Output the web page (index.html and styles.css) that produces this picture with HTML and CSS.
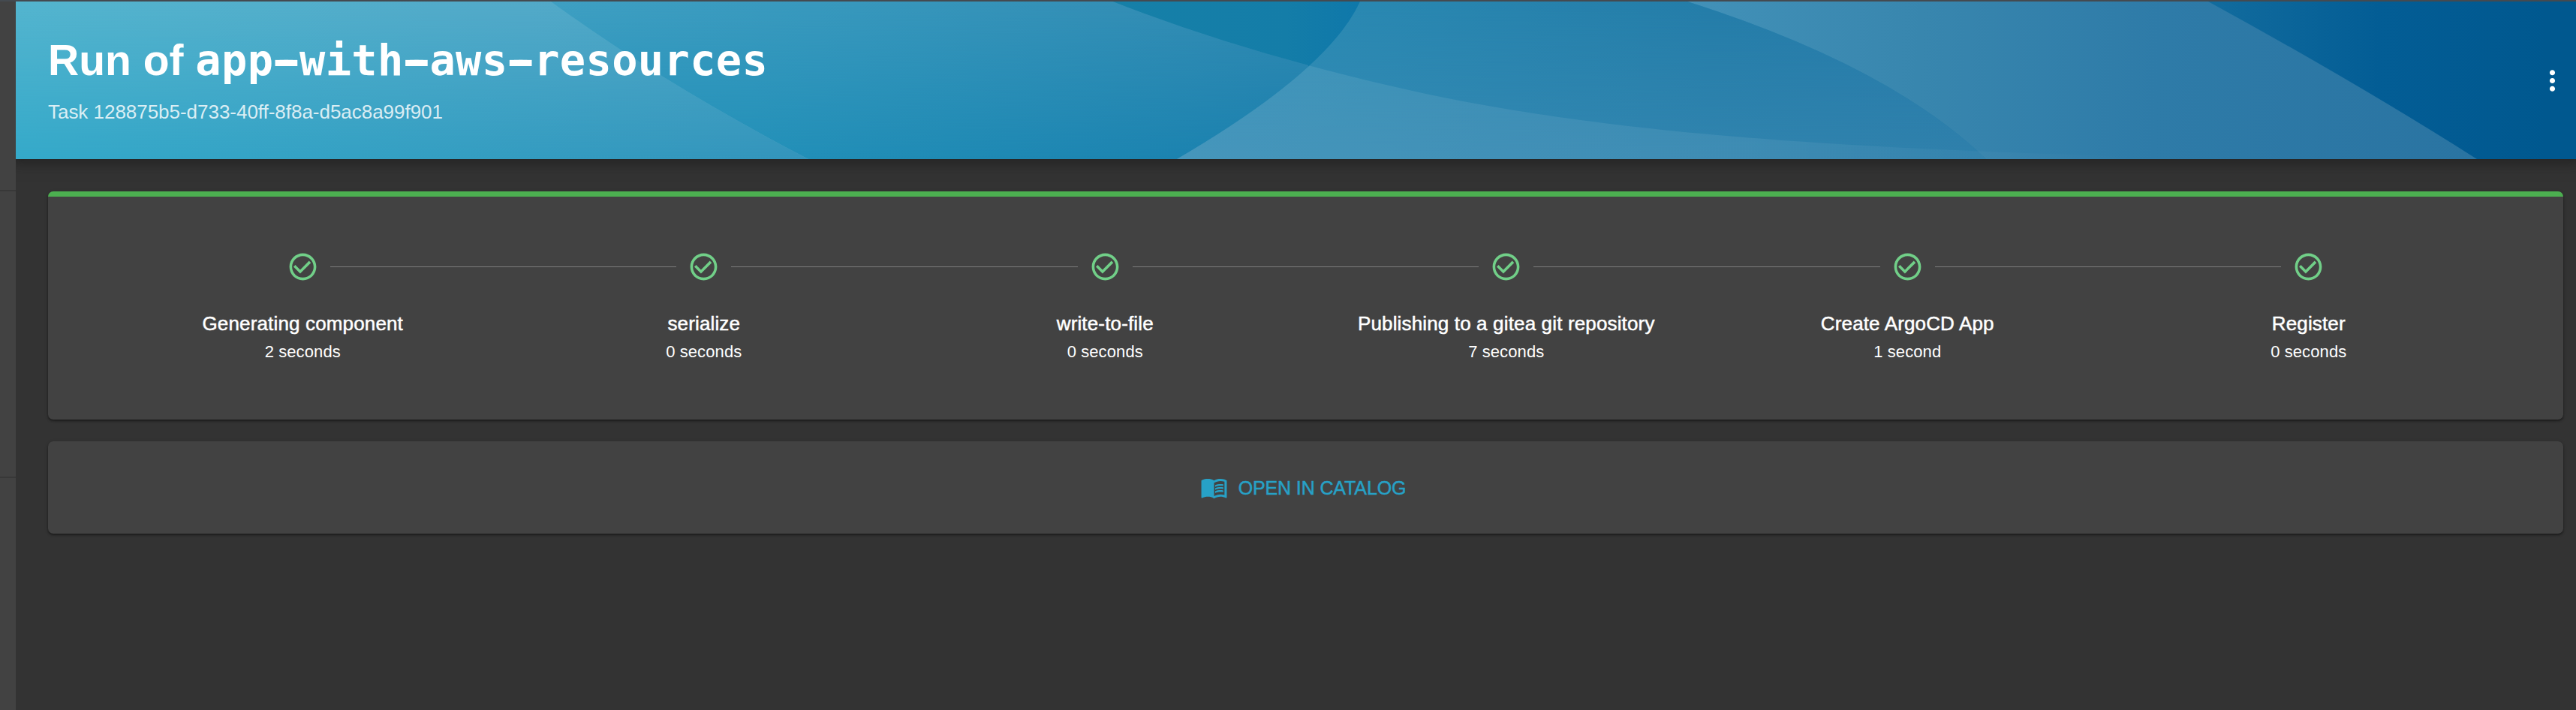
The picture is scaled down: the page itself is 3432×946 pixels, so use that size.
FILE: index.html
```html
<!DOCTYPE html>
<html lang="en">
<head>
<meta charset="utf-8">
<title>Run of app-with-aws-resources</title>
<link rel="stylesheet" href="styles.css">
</head>
<body>
<svg class="sprite" aria-hidden="true">
  <symbol id="check" viewBox="0 0 24 24"><path d="M16.59 7.58L10 14.17l-3.59-3.58L5 12l5 5 8-8zM12 2C6.48 2 2 6.48 2 12s4.48 10 10 10 10-4.48 10-10S17.52 2 12 2zm0 18c-4.42 0-8-3.58-8-8s3.58-8 8-8 8 3.58 8 8-3.58 8-8 8z"/></symbol>
</svg>
<div class="topline"></div>
<div class="app">
  <aside class="sidebar">
    <hr class="divider divider-first">
    <hr class="divider divider-second">
  </aside>
  <main class="page">
    <header class="header">
      <svg class="waves" viewBox="21 2 3411 210" preserveAspectRatio="none" aria-hidden="true">
        <defs>
          <linearGradient id="base" gradientUnits="userSpaceOnUse" x1="1482" y1="0" x2="3400" y2="0">
            <stop offset="0" stop-color="#1680a8"/><stop offset=".12" stop-color="#147da8"/><stop offset=".17" stop-color="#0f78aa"/><stop offset=".76" stop-color="#126c9e"/><stop offset=".88" stop-color="#035d95"/><stop offset="1" stop-color="#00588f"/>
          </linearGradient>
          <linearGradient id="left" gradientUnits="userSpaceOnUse" x1="21" y1="0" x2="1077" y2="0">
            <stop offset="0" stop-color="#54b5cf"/><stop offset=".65" stop-color="#53aac9"/><stop offset="1" stop-color="#4fa4c4"/>
          </linearGradient>
          <linearGradient id="leftLow" gradientUnits="userSpaceOnUse" x1="21" y1="0" x2="1077" y2="0">
            <stop offset="0" stop-color="#34a9c9"/><stop offset="1" stop-color="#3394bb"/>
          </linearGradient>
          <linearGradient id="mid" gradientUnits="userSpaceOnUse" x1="734" y1="0" x2="1743" y2="0">
            <stop offset="0" stop-color="#3fa0c3"/><stop offset=".4" stop-color="#3898bd"/><stop offset="1" stop-color="#3189b1"/>
          </linearGradient>
          <linearGradient id="midLow" gradientUnits="userSpaceOnUse" x1="1000" y1="0" x2="1700" y2="0">
            <stop offset="0" stop-color="#2290b8"/><stop offset="1" stop-color="#1a80ae"/>
          </linearGradient>
          <linearGradient id="lens" gradientUnits="userSpaceOnUse" x1="1743" y1="0" x2="2640" y2="0">
            <stop offset="0" stop-color="#2a8ab3"/><stop offset=".6" stop-color="#247da9"/><stop offset="1" stop-color="#267aaa"/>
          </linearGradient>
          <linearGradient id="lensLow" gradientUnits="userSpaceOnUse" x1="1568" y1="0" x2="2640" y2="0">
            <stop offset="0" stop-color="#348cb5"/><stop offset="1" stop-color="#2f80ab"/>
          </linearGradient>
          <linearGradient id="band" gradientUnits="userSpaceOnUse" x1="2248" y1="0" x2="3300" y2="60">
            <stop offset="0" stop-color="#4291b8"/><stop offset=".3" stop-color="#3886ae"/><stop offset=".6" stop-color="#2e7ba8"/><stop offset="1" stop-color="#2a74a2"/>
          </linearGradient>
          <linearGradient id="sheen" gradientUnits="userSpaceOnUse" x1="1568" y1="0" x2="2850" y2="0">
            <stop offset="0" stop-color="#fff" stop-opacity=".09"/><stop offset=".6" stop-color="#fff" stop-opacity=".07"/><stop offset="1" stop-color="#fff" stop-opacity="0"/>
          </linearGradient>
          <linearGradient id="fade" x1="0" y1="0" x2="0" y2="1">
            <stop offset="0" stop-color="#fff" stop-opacity="0"/><stop offset="1" stop-color="#fff"/>
          </linearGradient>
          <mask id="down" maskUnits="userSpaceOnUse" x="0" y="0" width="3432" height="214"><rect width="3432" height="214" fill="url(#fade)"/></mask>
          <clipPath id="lensClip"><path d="M1812 2H3300V212H1568Q1770 94 1812 2Z"/></clipPath>
        </defs>
        <rect x="21" y="2" width="3411" height="210" fill="url(#base)"/>
        <path fill="url(#mid)" d="M700 2H1482.600Q1605 50 1743 87V212H1060Z"/>
        <path fill="url(#midLow)" mask="url(#down)" d="M700 2H1482.600Q1605 50 1743 87V212H1060Z"/>
        <path fill="url(#left)" d="M21 2H734Q885 112 1077 212H21Z"/>
        <path fill="url(#leftLow)" mask="url(#down)" d="M21 2H734Q885 112 1077 212H21Z"/>
        <path fill="url(#lens)" d="M1812 2H2248Q2518 88 2646 212H1568Q1770 94 1812 2Z"/>
        <path fill="url(#lensLow)" mask="url(#down)" d="M1812 2H2248Q2518 88 2646 212H1568Q1770 94 1812 2Z"/>
        <path fill="url(#band)" d="M2248 2H2942Q3141 111 3300 212H2646Q2518 88 2248 2Z"/>
        <path fill="url(#sheen)" clip-path="url(#lensClip)" d="M1743 87C1990 153 2230 194 2900 210V212H1540V87Z"/>
      </svg>
      <div class="heading">
        <h1 class="title">Run of <code class="name">app<span class="dash">-</span>with<span class="dash">-</span>aws<span class="dash">-</span>resources</code></h1>
        <p class="subtitle">Task 128875b5-d733-40ff-8f8a-d5ac8a99f901</p>
      </div>
      <svg class="more" viewBox="0 0 24 24"><path d="M12 8c1.100 0 2-.9 2-2s-.9-2-2-2-2 .9-2 2 .9 2 2 2zm0 2c-1.100 0-2 .9-2 2s.9 2 2 2 2-.9 2-2-.9-2-2-2zm0 6c-1.100 0-2 .9-2 2s.9 2 2 2 2-.9 2-2-.9-2-2-2z"/></svg>
    </header>
    <div class="content">
      <section class="card steps-card">
        <div class="progress"></div>
        <ol class="steps">
          <li class="step"><div class="track"><i class="line hidden"></i><svg class="check"><use href="#check"/></svg><i class="line"></i></div><div class="label">Generating component</div><div class="time">2 seconds</div></li>
          <li class="step"><div class="track"><i class="line"></i><svg class="check"><use href="#check"/></svg><i class="line"></i></div><div class="label">serialize</div><div class="time">0 seconds</div></li>
          <li class="step"><div class="track"><i class="line"></i><svg class="check"><use href="#check"/></svg><i class="line"></i></div><div class="label">write-to-file</div><div class="time">0 seconds</div></li>
          <li class="step"><div class="track"><i class="line"></i><svg class="check"><use href="#check"/></svg><i class="line"></i></div><div class="label">Publishing to a gitea git repository</div><div class="time">7 seconds</div></li>
          <li class="step"><div class="track"><i class="line"></i><svg class="check"><use href="#check"/></svg><i class="line"></i></div><div class="label">Create ArgoCD App</div><div class="time">1 second</div></li>
          <li class="step"><div class="track"><i class="line"></i><svg class="check"><use href="#check"/></svg><i class="line hidden"></i></div><div class="label">Register</div><div class="time">0 seconds</div></li>
        </ol>
      </section>
      <section class="card links-card">
        <a class="open">
          <svg class="book" viewBox="0 0 24 24"><path d="M21 5c-1.110-.35-2.330-.5-3.500-.5-1.950 0-4.050.4-5.500 1.500-1.450-1.100-3.550-1.500-5.500-1.500S2.450 4.900 1 6v14.650c0 .25.25.5.5.5.1 0 .15-.05.25-.05C3.100 20.450 5.050 20 6.500 20c1.950 0 4.050.4 5.500 1.500 1.350-.85 3.800-1.500 5.500-1.500 1.650 0 3.350.3 4.750 1.050.1.050.15.050.25.050.25 0 .5-.25.5-.5V6c-.6-.45-1.250-.75-2-1zm0 13.500c-1.100-.35-2.300-.5-3.500-.5-1.700 0-4.150.65-5.500 1.500V8c1.350-.85 3.800-1.500 5.500-1.500 1.200 0 2.400.15 3.500.5v11.500z"/><path d="M17.500 10.500c.88 0 1.730.09 2.500.26V9.240c-.79-.15-1.640-.24-2.500-.24-1.700 0-3.240.29-4.500.83v1.660c1.130-.64 2.700-.99 4.500-.99zM13 12.490v1.660c1.130-.64 2.700-.99 4.500-.99.88 0 1.730.09 2.500.26V11.900c-.79-.15-1.640-.24-2.500-.24-1.700 0-3.240.3-4.500.83zM17.500 14.330c-1.700 0-3.240.29-4.500.83v1.660c1.130-.64 2.700-.99 4.500-.99.88 0 1.730.09 2.500.26v-1.520c-.79-.16-1.640-.24-2.500-.24z"/></svg>
          <span class="open-text">OPEN IN CATALOG</span>
        </a>
      </section>
    </div>
  </main>
</div>
</body>
</html>
```
FILE: styles.css
```css
* { box-sizing: border-box; }
body {
  margin: 0;
  height: 946px;
  overflow: hidden;
  background: #333;
  color: #fff;
  font-family: "Liberation Sans", Arial, sans-serif;
}
.sprite { display: none; }
.topline { height: 2px; background: #444a50; }
.app { display: flex; height: 944px; }
.sidebar { width: 21px; background: #424242; }
.divider { border: 0; height: 2px; margin: 0; background: #383838; }
.divider-first { margin-top: 251px; }
.divider-second { margin-top: 380px; }
.page { flex: 1; overflow: hidden; }
.header {
  position: relative;
  display: flex;
  align-items: center;
  justify-content: space-between;
  height: 210px;
  padding: 0 10px 0 43px;
  box-shadow: 0 0 16px 6px rgba(20, 20, 20, .5);
}
.waves { position: absolute; inset: 0; width: 100%; height: 100%; }
.heading { position: relative; align-self: flex-start; padding-top: 44px; }
.title { margin: 0; font-size: 57px; line-height: 68px; font-weight: 700; white-space: nowrap; }
.name { font-family: "DejaVu Sans Mono", monospace; font-size: 57px; line-height: 1; letter-spacing: .36px; }
/* widens the hyphens without changing their advance */
.dash { text-shadow: -6px 0 #fff, 6px 0 #fff; }
.subtitle { margin: 20px 0 0; font-size: 26px; line-height: 30px; letter-spacing: -.03px; color: rgba(255, 255, 255, .82); }
.more { position: relative; width: 43px; height: 43px; fill: #fff; }
.content { padding: 43px 17px 0 43px; }
.card {
  border-radius: 7px;
  background: #424242;
  box-shadow: 0 2px 3px rgba(0, 0, 0, .4), 0 1px 5px rgba(0, 0, 0, .15);
}
.steps-card { height: 304px; margin-bottom: 29px; overflow: hidden; }
.progress { height: 7px; background: #4caf50; }
.steps { display: flex; margin: 0; padding: 72px 72px 0; list-style: none; }
.step { flex: 1 1 0; text-align: center; white-space: nowrap; }
.track { display: flex; align-items: center; height: 43px; }
.line { flex: 1; height: 1px; background: #7c7c7c; }
.hidden { visibility: hidden; }
.check { width: 43px; height: 43px; margin: 0 15px; fill: #71cf88; }
.label { margin-top: 39px; font-size: 26px; line-height: 30px; letter-spacing: .15px; -webkit-text-stroke: .5px #fff; }
.time { margin-top: 10px; font-size: 22px; line-height: 26px; letter-spacing: .1px; }
.links-card { display: flex; align-items: center; justify-content: center; height: 123px; }
.open { display: flex; align-items: center; gap: 14px; padding-right: 7px; color: #27a1c6; }
.book { width: 37px; height: 37px; fill: currentColor; }
.open-text { font-size: 25px; line-height: 30px; letter-spacing: -.12px; -webkit-text-stroke: .5px currentColor; }
```
